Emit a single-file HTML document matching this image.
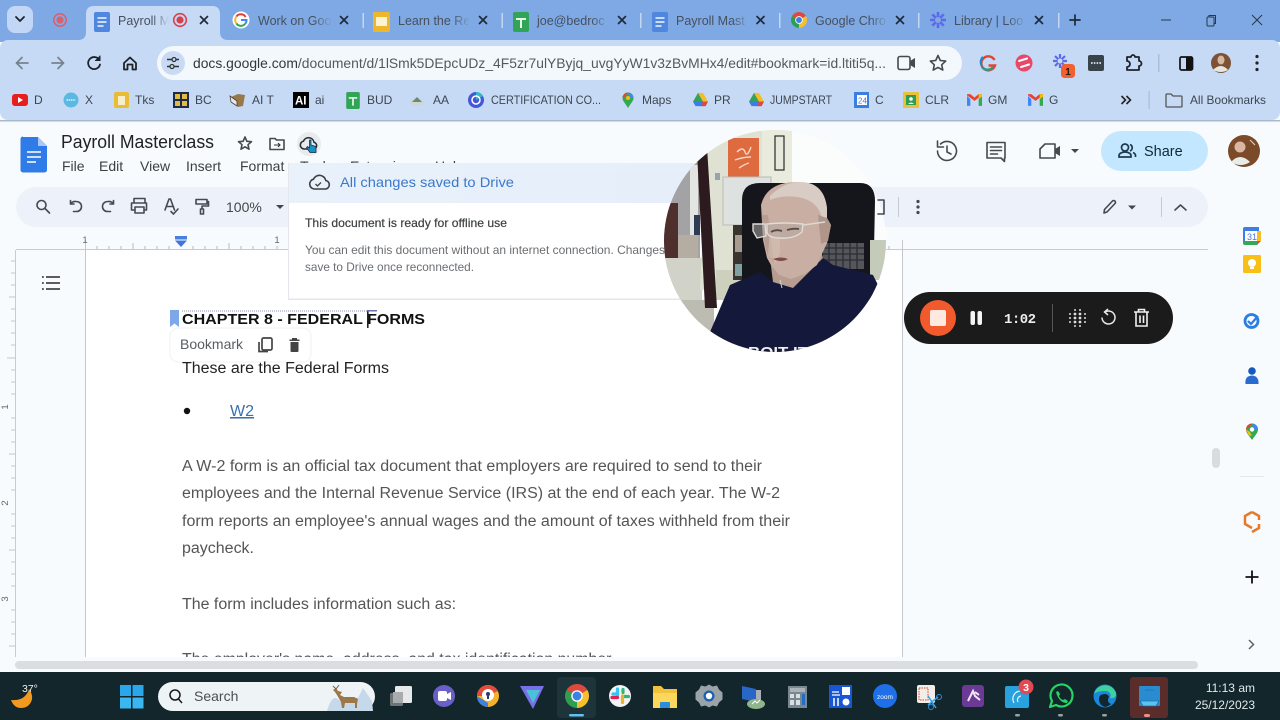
<!DOCTYPE html>
<html lang="en"><head><meta charset="utf-8"><title>Payroll Masterclass</title>
<style>
html,body{margin:0;padding:0;width:1280px;height:720px;overflow:hidden;background:#f8fbfd}
svg{display:block;position:absolute;left:0;top:0;filter:blur(.35px)}
text{font-family:"Liberation Sans",sans-serif;white-space:pre}
.tab{font-size:12.5px;fill:#46505e}
.bm{font-size:12px;fill:#3d4650}
.x{stroke:#1f2a38;stroke-width:1.7;fill:none;stroke-linecap:round}
.ic{fill:none;stroke:#444a50;stroke-width:1.6;stroke-linecap:round;stroke-linejoin:round}
.ic2{fill:none;stroke:#1f2328;stroke-width:1.8;stroke-linecap:round;stroke-linejoin:round}
.menu{font-size:14px;fill:#3c4043}
.body{font-size:15.4px;fill:#555}
</style></head><body>
<svg width="1280" height="720" viewBox="0 0 1280 720" xmlns="http://www.w3.org/2000/svg">
<defs>
<symbol id="chrome" viewBox="-10 -10 20 20" overflow="visible"><path d="M0 0L-8.66-5A10 10 0 0 1 8.66-5Z" fill="#dd4a3d"/><path d="M0 0L8.66-5A10 10 0 0 1 0 10Z" fill="#f6c02d"/><path d="M0 0L0 10A10 10 0 0 1-8.66-5Z" fill="#2f9e50"/><circle r="4.8" fill="#fff"/><circle r="3.7" fill="#3b82e6"/></symbol>
<symbol id="docs" viewBox="0 0 16 20" overflow="visible"><rect width="16" height="20" rx="2" fill="#4f86e0"/><path d="M3.5 6h9M3.5 10h9M3.5 14h6" stroke="#dbe7fb" stroke-width="1.8"/></symbol>
<symbol id="sheets" viewBox="0 0 16 20" overflow="visible"><rect width="16" height="20" rx="2" fill="#32a456"/><path d="M3 7h10M8 7v9" stroke="#e6f5ea" stroke-width="2"/></symbol>
<symbol id="drive" viewBox="0 0 18 16" overflow="visible"><path d="M6 0h6l6 10.5h-6z" fill="#f5bd26"/><path d="M6 0l6 10.5-3 5.5L0 10.5z" fill="#2f9e50" opacity=".95"/><path d="M0 10.5h18l-3 5.5H3z" fill="#3b7de6"/><path d="M12 10.5h6l-3 5.5H9z" fill="#dd4a3d"/></symbol>
<symbol id="gmail" viewBox="0 0 18 14" overflow="visible"><path d="M0 2v12h4V6z" fill="#4285f4"/><path d="M14 6v8h4V2z" fill="#34a853"/><path d="M0 1.5L9 8l9-6.5V0h-4L9 4 4 0H0z" fill="#ea4335"/><path d="M14 0h4v3l-4 3z" fill="#fbbc04"/></symbol>
<clipPath id="cam"><circle cx="775" cy="241" r="111"/></clipPath>
<clipPath id="doc"><rect x="85" y="250" width="818" height="407"/></clipPath>
<linearGradient id="hd" x1="0" x2="1" y1="0" y2="0"><stop offset="0" stop-color="#e9f1fb"/><stop offset="1" stop-color="#e5eef9"/></linearGradient>
<linearGradient id="fa" x1="0" x2="1" y1="0" y2="0"><stop offset="0" stop-color="#c6daf5" stop-opacity="0"/><stop offset="1" stop-color="#c6daf5"/></linearGradient>
<linearGradient id="fb" x1="0" x2="1" y1="0" y2="0"><stop offset="0" stop-color="#7fa9e4" stop-opacity="0"/><stop offset="1" stop-color="#7fa9e4"/></linearGradient>
</defs>

<!-- page -->
<rect width="1280" height="720" fill="#f8fbfd"/>

<!-- tab strip -->
<rect width="1280" height="42" fill="#7fa9e4"/>
<rect y="40" width="1280" height="80" rx="8" fill="#c6daf5"/>
<rect y="120" width="1280" height="1.5" fill="#a9b8cc"/>
<rect x="7" y="6" width="26" height="27" rx="8" fill="#c2d7f5"/>
<path d="M16 18l4 4 4-4" class="ic2" transform="translate(0 -1)"/>
<circle cx="60" cy="20" r="6.2" fill="none" stroke="#d8616c" stroke-width="1.6"/><circle cx="60" cy="20" r="3.6" fill="#d8616c"/>
<path d="M78 40q8 0 8-8V14q0-8 8-8h118q8 0 8 8v18q0 8 8 8z" fill="#c6daf5"/>
<use href="#docs" x="94" y="12" width="16" height="20"/>
<text x="118" y="25" class="tab">Payroll M</text>
<rect x="152" y="12" width="17" height="16" fill="url(#fa)"/>
<circle cx="180" cy="20" r="6.3" fill="none" stroke="#d8414c" stroke-width="1.6"/><circle cx="180" cy="20" r="3.6" fill="#d8414c"/>
<path d="M200.500 16.500l7 7m0-7l-7 7" class="x"/>

<circle cx="241" cy="20" r="8.500" fill="#fff"/>
<path d="M245.600 17A5.500 5.500 0 0 0 236.400 16.500" fill="none" stroke="#e34133" stroke-width="2"/>
<path d="M236.400 16.500A5.500 5.500 0 0 0 236.400 23.500" fill="none" stroke="#f6bd2a" stroke-width="2"/>
<path d="M236.400 23.500A5.500 5.500 0 0 0 245 24" fill="none" stroke="#34a853" stroke-width="2"/>
<path d="M245 24a5.500 5.500 0 0 0 1.500-4H241" fill="none" stroke="#4285f4" stroke-width="2"/>
<text x="258" y="25" class="tab">Work on Goo</text>
<rect x="314" y="12" width="18" height="16" fill="url(#fb)"/>
<path d="M340.500 16.500l7 7m0-7l-7 7" class="x"/>
<rect x="362.500" y="13" width="1.500" height="15" fill="#c4d6f0"/>

<rect x="373" y="12" width="17" height="20" rx="2" fill="#eeb72b"/><rect x="376" y="17" width="11" height="9" fill="#fdf3d0"/>
<text x="398" y="25" class="tab">Learn the Re</text>
<rect x="452" y="12" width="18" height="16" fill="url(#fb)"/>
<path d="M479.500 16.500l7 7m0-7l-7 7" class="x"/>
<rect x="501.500" y="13" width="1.500" height="15" fill="#c4d6f0"/>

<use href="#sheets" x="513" y="12" width="16" height="20"/>
<text x="537" y="25" class="tab">joe@bedroc</text>
<rect x="592" y="12" width="18" height="16" fill="url(#fb)"/>
<path d="M618.500 16.500l7 7m0-7l-7 7" class="x"/>
<rect x="640" y="13" width="1.500" height="15" fill="#c4d6f0"/>

<use href="#docs" x="652" y="12" width="16" height="20"/>
<text x="676" y="25" class="tab">Payroll Mast</text>
<rect x="732" y="12" width="18" height="16" fill="url(#fb)"/>
<path d="M757 16.500l7 7m0-7l-7 7" class="x"/>
<rect x="779" y="13" width="1.500" height="15" fill="#c4d6f0"/>

<use href="#chrome" x="791" y="12" width="16" height="16"/>
<text x="815" y="25" class="tab">Google Chro</text>
<rect x="870" y="12" width="18" height="16" fill="url(#fb)"/>
<path d="M896.500 16.500l7 7m0-7l-7 7" class="x"/>
<rect x="918" y="13" width="1.500" height="15" fill="#c4d6f0"/>

<g stroke="#5b6be8" stroke-width="2.600" transform="translate(938 20)"><path d="M0-8V8M-8 0H8M-5.700-5.700L5.700 5.700M-5.700 5.700L5.700-5.700"/></g><circle cx="938" cy="20" r="3" fill="#7fa9e4"/>
<text x="954" y="25" class="tab">Library | Loo</text>
<rect x="1008" y="12" width="18" height="16" fill="url(#fb)"/>
<path d="M1035.500 16.500l7 7m0-7l-7 7" class="x"/>
<rect x="1058" y="13" width="1.500" height="15" fill="#c4d6f0"/>
<path d="M1075 15v10M1070 20h10" class="x"/>
<path d="M1161 20h10" stroke="#2b3646" stroke-width="1"/>
<rect x="1207" y="17" width="7" height="9" rx="1" fill="none" stroke="#2b3646"/><path d="M1209 17v-1.500h6.500v8H1214" fill="none" stroke="#2b3646"/>
<path d="M1252 15l10 10m0-10l-10 10" stroke="#2b3646" stroke-width="1" fill="none"/>

<!-- nav -->
<path d="M28 63H17M22 57.500L16.500 63l5.500 5.500" fill="none" stroke="#76838f" stroke-width="1.700" stroke-linecap="round"/>
<path d="M52 63h11M58 57.500l5.500 5.500-5.500 5.500" fill="none" stroke="#76838f" stroke-width="1.700" stroke-linecap="round"/>
<path d="M99 59.500A6 6 0 1 0 100 64.500" class="ic2"/><path d="M100 55.500v5h-5" fill="#1f2328" stroke="#1f2328" stroke-width="1"/>
<path d="M124 63l6-5.500 6 5.500v6.500h-3.500V64.500h-5v5H124z" class="ic2"/>
<rect x="157" y="46" width="805" height="34" rx="17" fill="#f3f8fd"/>
<circle cx="173" cy="63" r="12" fill="#c9dbf4"/>
<path d="M167 59.500h5M176 59.500h3M167 66.500h3M174 66.500h5" stroke="#333" stroke-width="1.400"/><circle cx="174" cy="59.500" r="2" fill="none" stroke="#333" stroke-width="1.300"/><circle cx="172" cy="66.500" r="2" fill="none" stroke="#333" stroke-width="1.300"/>
<text x="193" y="68" font-size="14" fill="#55595e" textLength="693" lengthAdjust="spacingAndGlyphs"><tspan fill="#33373c">docs.google.com</tspan>/document/d/1lSmk5DEpcUDz_4F5zr7ulYByjq_uvgYyW1v3zBvMHx4/edit#bookmark=id.ltiti5q...</text>
<rect x="898" y="56.500" width="12" height="13" rx="2" class="ic"/><path d="M910 61l5-3v10l-5-3z" fill="#444a50"/>
<path d="M938 55.500l2.300 5 5.400.6-4 3.700 1.100 5.300-4.800-2.700-4.800 2.700 1.100-5.300-4-3.700 5.400-.6z" class="ic"/>
<path d="M994.500 60a7 7 0 1 0 .5 5.500H988.500" fill="none" stroke="#e5452f" stroke-width="2.400"/><path d="M983 57a7 7 0 0 0-1.500 8" fill="none" stroke="#1e88c7" stroke-width="2.400"/><path d="M982 67a7 7 0 0 0 11 0" fill="none" stroke="#2a9a8b" stroke-width="2.400"/>
<circle cx="1024" cy="63" r="8.500" fill="#e8496a"/><path d="M1019 61l8-2.500M1021 67l8-2.500" stroke="#fff" stroke-width="2" stroke-linecap="round"/>
<g stroke="#5b6be8" stroke-width="2.200" transform="translate(1060 61)"><path d="M0-7V7M-7 0H7M-5-5L5 5M-5 5L5-5"/></g><circle cx="1060" cy="61" r="2.500" fill="#c6daf5"/>
<rect x="1061" y="64" width="14" height="14" rx="3.500" fill="#f2602f"/><text x="1068" y="75" font-size="10" font-weight="700" fill="#2a1a14" text-anchor="middle">1</text>
<rect x="1088" y="55" width="16" height="16" rx="2" fill="#37424a"/><path d="M1091 63h10" stroke="#fff" stroke-width="1.600" stroke-dasharray="1.600 1.200"/>
<path d="M1127 57h4a2 2 0 0 1 4 0h4v4a2.500 2.500 0 0 1 0 5v4h-12v-3a2.500 2.500 0 0 0 0-6z" class="ic2"/>
<rect x="1158" y="54" width="1.500" height="18" fill="#a7bedd"/>
<rect x="1180" y="57" width="12.500" height="13" rx="1.500" fill="none" stroke="#111" stroke-width="1.700"/><rect x="1186" y="57" width="6.500" height="13" fill="#111"/>
<circle cx="1221" cy="63" r="10" fill="#7b5236"/><ellipse cx="1221" cy="60" rx="3.500" ry="4.500" fill="#d8b8a0"/><path d="M1213 70q8-8 15 0-7 4-15 0z" fill="#e5e6e2"/>
<g fill="#222"><circle cx="1257" cy="56.500" r="1.600"/><circle cx="1257" cy="63" r="1.600"/><circle cx="1257" cy="69.500" r="1.600"/></g>

<!-- bookmarks -->
<rect x="12" y="94" width="16" height="12" rx="3" fill="#e81d1d"/><path d="M18 97l5 3-5 3z" fill="#fff"/>
<text x="34" y="104" class="bm">D</text>
<circle cx="71" cy="100" r="7.500" fill="#5ab9e2"/><path d="M66.500 100h9" stroke="#fff" stroke-width="1.200" stroke-dasharray="1.500 .7"/>
<text x="85" y="104" class="bm">X</text>
<rect x="114" y="92" width="15" height="16" rx="2" fill="#e9bc36"/><rect x="118" y="96" width="7" height="9" fill="#f8efc8"/>
<text x="135" y="104" class="bm">Tks</text>
<rect x="173" y="92" width="16" height="16" fill="#1c2a4d"/><path d="M175 94h5v5h-5zM182 94h5v5h-5zM175 101h5v5h-5zM182 101h5v5h-5z" fill="#e3bb41"/>
<text x="195" y="104" class="bm">BC</text>
<path d="M231 97l7-3 7 1-2 11-5 1-4-5z" fill="#9a7747"/><path d="M230 96l7 5v5l-6-4z" fill="#e8e8e8" stroke="#444" stroke-width=".8"/>
<text x="252" y="104" class="bm">AI T</text>
<rect x="293" y="92" width="16" height="16" fill="#000"/><text x="295" y="104.500" font-size="11.500" font-weight="700" fill="#fff">AI</text>
<text x="315" y="104" class="bm">ai</text>
<use href="#sheets" x="345" y="92" width="16" height="17"/>
<text x="367" y="104" class="bm">BUD</text>
<ellipse cx="417" cy="102" rx="7" ry="4" fill="#cfd6d6"/><path d="M412 102l5-5 5 5z" fill="#6b8a76"/>
<text x="433" y="104" class="bm">AA</text>
<circle cx="476" cy="100" r="8" fill="#4656d8"/><path d="M476 92a8 8 0 0 1 7 4l-7 4z" fill="#30b9c9"/><circle cx="476" cy="100" r="4" fill="none" stroke="#fff" stroke-width="1.500"/>
<text x="491" y="104" class="bm" textLength="110" lengthAdjust="spacingAndGlyphs">CERTIFICATION CO...</text>
<path d="M628 108c-3-5-5.500-7-5.500-10a5.500 5.500 0 0 1 11 0c0 3-2.500 5-5.500 10z" fill="#34a853"/><path d="M622.500 98a5.500 5.500 0 0 1 5.500-5.500l-3 4z" fill="#ea4335"/><path d="M628 92.500a5.500 5.500 0 0 1 5.500 5.500H630z" fill="#4285f4"/><circle cx="628" cy="98" r="2" fill="#fbbc04"/>
<text x="642" y="104" class="bm">Maps</text>
<use href="#drive" x="693" y="92" width="15" height="15"/>
<text x="714" y="104" class="bm">PR</text>
<use href="#drive" x="749" y="92" width="15" height="15"/>
<text x="770" y="104" class="bm" textLength="62" lengthAdjust="spacingAndGlyphs">JUMPSTART</text>
<rect x="854" y="92" width="15" height="16" fill="#3c7de0"/><rect x="857" y="95" width="10" height="10" fill="#fff"/><text x="858" y="103.500" font-size="8" fill="#3c7de0">24</text>
<text x="875" y="104" class="bm">C</text>
<rect x="903" y="92" width="16" height="16" fill="#e9c13c"/><rect x="906" y="95" width="10" height="10" fill="#2f9e50"/><circle cx="911" cy="99" r="1.800" fill="#fff"/><path d="M908 104q3-3 6 0" fill="#fff"/>
<text x="925" y="104" class="bm">CLR</text>
<use href="#gmail" x="967" y="94" width="15" height="12"/>
<text x="988" y="104" class="bm">GM</text>
<use href="#gmail" x="1028" y="94" width="15" height="12"/>
<text x="1049" y="104" class="bm">G</text>
<path d="M1121.500 96l4 4-4 4M1126.500 96l4 4-4 4" fill="none" stroke="#222" stroke-width="1.600"/>
<rect x="1148.500" y="91" width="1.300" height="18" fill="#a7bedd"/>
<path d="M1166 95a1 1 0 0 1 1-1h4l2 2h8a1 1 0 0 1 1 1v9a1 1 0 0 1-1 1h-14a1 1 0 0 1-1-1z" fill="none" stroke="#555" stroke-width="1.300"/>
<text x="1190" y="104" class="bm" textLength="76" lengthAdjust="spacingAndGlyphs">All Bookmarks</text>

<!-- docs header -->
<path d="M23 137h15l9 9v24a2.500 2.500 0 0 1-2.500 2.500h-21.500a2.500 2.500 0 0 1-2.500-2.500v-31a2.500 2.500 0 0 1 2.500-2.500z" fill="#2f7be8"/>
<path d="M38 137l9 9h-9z" fill="#a8c7fa"/><path d="M27 152h14M27 157h14M27 162h9" stroke="#e3eeff" stroke-width="1.800"/>
<text x="61" y="148" font-size="18" fill="#202124" textLength="153" lengthAdjust="spacingAndGlyphs">Payroll Masterclass</text>
<path d="M245 137l1.900 4.300 4.600.4-3.500 3 1 4.500-4-2.400-4 2.400 1-4.500-3.500-3 4.600-.4z" class="ic"/>
<path d="M270 138.500h5l1.500 1.500h7.500v9.500h-14z" class="ic" stroke="#333"/><path d="M274 145h6m-2-2l2 2-2 2" stroke="#333" stroke-width="1.100" fill="none"/>
<circle cx="309" cy="144" r="12" fill="#e8ebee"/>
<path d="M304 149a4 4 0 0 1-.5-7.900 5.500 5.500 0 0 1 10.500 1.200 3.400 3.400 0 0 1-.5 6.700z" fill="none" stroke="#2b2f33" stroke-width="1.600"/>
<path d="M309.500 140v8l-2-1.500-1 1 3.500 5h6v-6l-5-1.500v-5z" fill="#1b8fc8" stroke="#123" stroke-width=".7"/>

<text x="62" y="171" class="menu">File</text><text x="99" y="171" class="menu">Edit</text><text x="140" y="171" class="menu">View</text><text x="186" y="171" class="menu">Insert</text><text x="240" y="171" class="menu">Format</text>
<text x="300" y="171" class="menu">Tools</text><text x="350" y="171" class="menu">Extensions</text><text x="435" y="171" class="menu">Help</text>

<!-- toolbar -->
<rect x="16" y="187" width="1192" height="40" rx="20" fill="#edf2fa"/>
<circle cx="41.500" cy="205" r="4.500" class="ic" stroke-width="1.800"/><path d="M45 208.500l4.500 4.500" class="ic" stroke-width="1.800"/>
<path d="M74 204h-3.500v-3.500M70.500 204a6 6 0 0 1 5.500-2.500c3.200 0 5.500 2 5.500 5s-2.300 5-5 5h-3" class="ic" transform="translate(0 0)"/>
<path d="M110 204h3.500v-3.500M113.500 204a6 6 0 0 0-5.500-2.500c-3.200 0-5.500 2-5.500 5s2.300 5 5 5h3" class="ic"/>
<path d="M134 203v-4.500h11V203M134 210h-2.500v-7h15v7H144M135 207h9v6h-9z" class="ic"/>
<path d="M165 210l4-11h1.500l4 11M166.500 206.500h7M171 211.500l2.500 2.500 4.500-5" class="ic" stroke-width="1.300"/>
<path d="M196 199.500h11v4.500h-11zM207 201.500h1.500v4.500h-6.500v3M200.500 209h3v5h-3z" class="ic" stroke-width="1.500"/>
<text x="226" y="212" font-size="14" fill="#444746">100%</text>
<path d="M276 205l4 4 4-4z" fill="#444746"/>
<rect x="898" y="197" width="1" height="20" fill="#c7c9cc"/>
<g fill="#444746"><circle cx="918" cy="201.500" r="1.600"/><circle cx="918" cy="207" r="1.600"/><circle cx="918" cy="212.500" r="1.600"/></g>
<path d="M1104 213l.5-3.500 8-8.500a1.500 1.500 0 0 1 2.500 2.500l-8 8.500z" class="ic"/>
<path d="M1128 205.500l4 4 4-4z" fill="#444746"/>
<rect x="1161" y="197" width="1" height="20" fill="#c7c9cc"/>
<path d="M1175 210l5.500-5 5.500 5" class="ic"/>

<!-- right head -->
<path d="M937.500 151a9.500 9.500 0 1 0 3-7" class="ic" stroke-width="2"/><path d="M937.500 141v6h6" class="ic" stroke-width="2"/><path d="M947 146v6l4 2" class="ic" stroke-width="2"/>
<path d="M987 142.500h18v15.500h-.5v3.500l-3.500-3.500H987z" class="ic" stroke-width="2"/><path d="M990.500 147h11M990.500 150.500h11M990.500 154h7" class="ic" stroke-width="1.500"/>
<path d="M1045 144h10v14h-15v-9z" class="ic" stroke-width="2"/><path d="M1055 149l5-3v10l-5-3z" fill="#444a50"/>
<path d="M1071 149l4 4 4-4z" fill="#444746"/>
<rect x="1101" y="131" width="107" height="40" rx="20" fill="#c2e7ff"/>
<circle cx="1125" cy="147.500" r="3.500" fill="none" stroke="#1f3a4d" stroke-width="1.700"/><path d="M1119 157v-1.500c0-2 3-3.500 6-3.500s6 1.500 6 3.500V157zM1130 144.500a3.500 3.500 0 0 1 0 6.500M1133 152.500c1.500.7 2.500 1.700 2.500 3V157" fill="none" stroke="#1f3a4d" stroke-width="1.700"/>
<text x="1144" y="156" font-size="14.500" fill="#0e2a3a">Share</text>
<circle cx="1244" cy="151" r="16" fill="#7b4a28"/><circle cx="1240" cy="147" r="5.500" fill="#d9b7a2"/><path d="M1231 162q9-10 19 0-9 6-19 0z" fill="#e8ece8"/><path d="M1250 140l5 5" stroke="#e8d8c8"/>

<!-- rulers -->
<rect x="16" y="249" width="1192" height="1" fill="#c9cccf"/>
<rect x="85" y="250" width="818" height="407" fill="#fff"/>
<rect x="85" y="240" width="1" height="417" fill="#c5c7ca"/>
<rect x="902" y="240" width="1" height="417" fill="#c5c7ca"/>
<path d="M97 246v3M109 246v3M121 246v3M133 243v6M145 246v3M157 246v3M169 246v3M193 246v3M205 246v3M217 246v3M229 243v6M241 246v3M253 246v3M265 246v3M277 246v3M889 246v3" stroke="#a8abae" stroke-width=".8"/>
<text x="85" y="243" font-size="9.500" fill="#666" text-anchor="middle">1</text><text x="277" y="243" font-size="9.500" fill="#666" text-anchor="middle">1</text>
<rect x="175" y="236" width="12" height="3.500" fill="#4a7fe0"/><path d="M175 240.500h12l-6 6.500z" fill="#3f75dc"/>
<rect x="15" y="250" width="1" height="407" fill="#c9cccf"/>
<path d="M11 261h4M11 273h4M11 285h4M9 297h6M11 309h4M11 321h4M11 333h4M11 345h4M7 358h8M11 370h4M11 382h4M11 394h4M11 418h4M11 430h4M11 442h4M9 454h6M11 466h4M11 478h4M11 490h4M11 514h4M11 526h4M11 538h4M9 550h6M11 562h4M11 574h4M11 586h4M11 610h4M11 622h4M11 634h4M9 646h6" stroke="#b3b6b9" stroke-width=".8"/>
<text transform="translate(8 407) rotate(-90)" font-size="9.500" fill="#666" text-anchor="middle">1</text>
<text transform="translate(8 503) rotate(-90)" font-size="9.500" fill="#666" text-anchor="middle">2</text>
<text transform="translate(8 599) rotate(-90)" font-size="9.500" fill="#666" text-anchor="middle">3</text>
<path d="M46 277h14M46 283h14M46 289h14" stroke="#444746" stroke-width="1.700"/><path d="M42 277h1.800M42 283h1.800M42 289h1.800" stroke="#444746" stroke-width="1.800"/>

<!-- doc -->
<path d="M182 311H376" stroke="#8a8fb5" stroke-width="1" stroke-dasharray="1 1"/>
<path d="M170 310h9v17l-4.500-3.500-4.500 3.500z" fill="#7da7e9"/>
<text x="182" y="324" font-size="15" font-weight="700" fill="#111" textLength="243" lengthAdjust="spacingAndGlyphs">CHAPTER 8 - FEDERAL FORMS</text>
<rect x="367" y="310" width="1.600" height="18" fill="#222"/><rect x="367" y="310" width="10" height="1.500" fill="#6a6fb0"/>
<rect x="170" y="328" width="141" height="34" rx="8" fill="#fff" stroke="#f0f1f2"/>
<text x="180" y="349" font-size="14" fill="#5a5e62">Bookmark</text>
<rect x="262" y="338" width="10" height="12" rx="1.500" fill="none" stroke="#444" stroke-width="1.700"/><path d="M259 342v9.500h9" fill="none" stroke="#444" stroke-width="1.700"/>
<path d="M289.500 339.500h10v1.500h-10z" fill="#444"/><path d="M292 338h5v2h-5zM290.500 342h8v9a1 1 0 0 1-1 1h-6a1 1 0 0 1-1-1z" fill="#444"/>
<text x="182" y="373" font-size="15.400" fill="#222" textLength="207" lengthAdjust="spacingAndGlyphs">These are the Federal Forms</text>
<circle cx="187" cy="411" r="3.200" fill="#111"/>
<text x="230" y="416" font-size="15.400" fill="#3a6fb0" text-decoration="underline" textLength="24" lengthAdjust="spacingAndGlyphs">W2</text>
<text x="182" y="471" class="body" textLength="580" lengthAdjust="spacingAndGlyphs">A W-2 form is an official tax document that employers are required to send to their</text>
<text x="182" y="498" class="body" textLength="598" lengthAdjust="spacingAndGlyphs">employees and the Internal Revenue Service (IRS) at the end of each year. The W-2</text>
<text x="182" y="526" class="body" textLength="608" lengthAdjust="spacingAndGlyphs">form reports an employee's annual wages and the amount of taxes withheld from their</text>
<text x="182" y="553" class="body" textLength="72" lengthAdjust="spacingAndGlyphs">paycheck.</text>
<text x="182" y="609" class="body" textLength="274" lengthAdjust="spacingAndGlyphs">The form includes information such as:</text>
<g clip-path="url(#doc)"><text x="182" y="664" class="body" textLength="433" lengthAdjust="spacingAndGlyphs">The employer's name, address, and tax identification number.</text></g>

<!-- popup -->
<rect x="288" y="163" width="420" height="137" fill="#e3e6ea"/>
<rect x="289" y="163" width="420" height="135.500" fill="#fff"/>
<rect x="289" y="163" width="420" height="40" fill="url(#hd)"/>
<path d="M314 189a5 5 0 0 1-.5-9.800 6.500 6.500 0 0 1 12.300 1.300 4.300 4.300 0 0 1-.3 8.500z" fill="none" stroke="#3c4043" stroke-width="1.600"/><path d="M315.500 184l2 2 3.500-3.500" fill="none" stroke="#3c4043" stroke-width="1.300"/>
<text x="340" y="187" font-size="14" fill="#3b78c9" textLength="174" lengthAdjust="spacingAndGlyphs">All changes saved to Drive</text>
<text x="305" y="227" font-size="12" fill="#3c4043" textLength="202" lengthAdjust="spacingAndGlyphs" stroke="#3c4043" stroke-width=".2">This document is ready for offline use</text>
<text x="305" y="254" font-size="12" fill="#6a6e72" textLength="360" lengthAdjust="spacingAndGlyphs">You can edit this document without an internet connection. Changes</text>
<text x="305" y="271" font-size="12" fill="#6a6e72" textLength="169" lengthAdjust="spacingAndGlyphs">save to Drive once reconnected.</text>

<!-- webcam -->
<circle cx="775" cy="241" r="111" fill="#fbfdfd" fill-opacity=".82"/>
<path d="M878 200h6v14h-6" class="ic"/>
<g clip-path="url(#cam)">
<!-- room left -->
<rect x="664" y="130" width="36" height="222" fill="#a3a3a6"/>
<rect x="690" y="165" width="8" height="75" fill="#e2e5e2"/>
<rect x="664" y="203" width="14" height="56" fill="#4e2f2c"/>
<rect x="678" y="235" width="20" height="23" fill="#b5aca2"/>
<rect x="664" y="258" width="38" height="94" fill="#d1d3c8"/>
<rect x="664" y="300" width="50" height="52" fill="#bdbcb2"/>
<rect x="694" y="215" width="6" height="20" fill="#2f3b55"/>
<!-- wall -->
<path d="M707 130h85v160H700z" fill="#dfe2d2"/>
<rect x="762" y="130" width="30" height="60" fill="#e9ebdd"/>
<rect x="716" y="270" width="80" height="30" fill="#cdd0bd"/>
<path d="M697 152l10-5 10 161h-12z" fill="#2d1a1f"/>
<rect x="728" y="138" width="31" height="39" fill="#de6a3f"/>
<path d="M737 152q6-6 8 0t6-5M735 160q8-3 16-3M739 168q6-4 10-5" stroke="#f3d9c8" stroke-width="1.400" fill="none"/>
<rect x="775" y="136" width="9" height="34" fill="#e6e8dc" stroke="#2a2a2a" stroke-width="1.200"/>
<rect x="715" y="173" width="5" height="7" fill="#9aa3a8"/>
<rect x="723" y="177" width="48" height="48" fill="#dde2e0" stroke="#b8bcb4"/>
<rect x="733" y="225" width="14" height="55" fill="#3a3431"/>
<rect x="735" y="235" width="11" height="17" fill="#a89b90"/>
<rect x="735" y="264" width="11" height="12" fill="#7fa2a0"/>
<!-- chair -->
<path d="M742 200q0-17 18-17h100q15 0 15 18l-2 100h-131z" fill="#15161b"/>
<rect x="823" y="243" width="41" height="26" fill="#55565b"/>
<path d="M823 248h41M823 254h41M823 260h41M829 243v26M836 243v26M843 243v26M850 243v26M857 243v26" stroke="#2c2d33" stroke-width="1.300"/>
<rect x="870" y="240" width="20" height="40" fill="#c4cbb8"/>
<!-- shirt -->
<path d="M706 360l4-28 20-47 30-13 13 10 20 6 30-30 10 7 40 10 5 10-18 37-33 22-30 20z" fill="#14183a"/>
<!-- neck & head -->
<path d="M770 258l3 24 20 6 30-30-6-20z" fill="#b79c90"/>
<path d="M797 182q24 0 30 26l0 10 4 7-4 18-10 22-12 9-14 5-12-4-8-10-4-7-4-18-2-35q6-23 36-23z" fill="#c9aea3"/>
<path d="M770 196q14-14 30-14 24 0 27 26l0 12-5-2q-4-16-20-20-18-4-32 2z" fill="#d8ccc5"/>
<path d="M818 215l9 3 4 7-3 16-7 3z" fill="#b0958a"/>
<path d="M762 215q-1 20 6 40l6 8-4-30-2-18z" fill="#a88f85" fill-opacity=".55"/>
<path d="M770 230l-2 25 8 8 4-10 0-22z" fill="#d6bfb4" fill-opacity=".6"/>
<!-- glasses -->
<path d="M753 224l12 0 1 12-9 2-4-7z" fill="#a7a6a5" fill-opacity=".55" stroke="#dedbd5" stroke-width="1.400"/>
<path d="M767 224q18-2 36 0l-1 8q-8 7-22 6-12 0-13-6z" fill="#b5a69f" fill-opacity=".6" stroke="#e0dcd6" stroke-width="1.400"/>
<path d="M803 225l22-3" stroke="#dcd8d0" stroke-width="1.500"/>
<path d="M771 232q5-3 11-1M787 230q6-2 12-1" stroke="#5b4a48" stroke-width="1.800" fill="none"/>
<path d="M773 259q8-3 15 0-7 4-15 0z" fill="#7e4a48"/>
<path d="M780 280l2 8" stroke="#d8cfc6" stroke-width="1"/>
<text x="748" y="357" font-size="15" font-weight="700" fill="#f0f0f0" textLength="60" lengthAdjust="spacingAndGlyphs">BOIT IT</text>
</g>

<!-- recorder -->
<rect x="904" y="292" width="269" height="52" rx="26" fill="#1b1b1b"/>
<circle cx="938" cy="318" r="18" fill="#f05a2c"/><rect x="930" y="310" width="16" height="16" rx="2" fill="#fde9e0"/>
<rect x="970.500" y="311" width="4.500" height="14" rx="2" fill="#f4f4f4"/><rect x="977.500" y="311" width="4.500" height="14" rx="2" fill="#f4f4f4"/>
<text x="1004" y="323" font-size="14" font-weight="700" fill="#eee" style="font-family:'Liberation Mono',monospace" textLength="32">1:02</text>
<rect x="1052" y="304" width="1" height="28" fill="#55585a"/>
<g fill="#ddd"><circle cx="1070" cy="314" r="1"/><circle cx="1070" cy="318" r="1"/><circle cx="1070" cy="322" r="1"/><circle cx="1085" cy="314" r="1"/><circle cx="1085" cy="318" r="1"/><circle cx="1085" cy="322" r="1"/><circle cx="1075" cy="310" r="1"/><circle cx="1080" cy="310" r="1"/><circle cx="1075" cy="326" r="1"/><circle cx="1080" cy="326" r="1"/><circle cx="1075" cy="314" r="1.400"/><circle cx="1080" cy="314" r="1.400"/><circle cx="1075" cy="318" r="1.400"/><circle cx="1080" cy="318" r="1.400"/><circle cx="1075" cy="322" r="1.400"/><circle cx="1080" cy="322" r="1.400"/></g>
<path d="M1105 312a6.500 6.500 0 1 1-3 5.500" fill="none" stroke="#e8e8e8" stroke-width="1.500"/><path d="M1108 309l-3.500 3 3.500 3" fill="none" stroke="#e8e8e8" stroke-width="1.500"/>
<path d="M1134 312h15M1138.500 312v-2.500h6v2.500M1136 312.500v13.500h11v-13.500M1140 315.500v7.500M1143.500 315.500v7.500" fill="none" stroke="#f0f0f0" stroke-width="1.600"/>

<!-- side panel -->
<rect x="1243" y="227" width="18" height="18" rx="1.500" fill="#fff"/><path d="M1243 229a2 2 0 0 1 2-2h14v4h-14v10h-2z" fill="#3d7de6"/><path d="M1243 241h14v4h-12a2 2 0 0 1-2-2z" fill="#34a853"/><path d="M1257 231h4v10h-4z" fill="#f6bd2a"/><path d="M1257 241h4l-4 4z" fill="#dd4a3d"/>
<text x="1252" y="240" font-size="9" fill="#4a7bd5" text-anchor="middle">31</text>
<rect x="1243" y="255" width="18" height="18" rx="1.500" fill="#f8bf17"/><circle cx="1252" cy="263" r="4" fill="#fff"/><rect x="1250" y="267" width="4" height="2" fill="#fff"/>
<circle cx="1251.500" cy="321" r="6.500" fill="none" stroke="#2b7de0" stroke-width="2.800"/><path d="M1248 321l3 3 7-8" fill="none" stroke="#2b7de0" stroke-width="2.200"/>
<circle cx="1252" cy="371" r="3.800" fill="#1558c0"/><path d="M1245.500 384q-1-8 6.500-8.500 7 .5 6.500 8.500z" fill="#2a6bd0"/>
<path d="M1252 440c-3-4.500-6-7-6-10.500a6 6 0 0 1 12 0c0 3.500-3 6-6 10.500z" fill="#34a853"/><path d="M1246 429.500a6 6 0 0 1 6-6l-3 4z" fill="#ea4335"/><path d="M1252 423.500a6 6 0 0 1 6 6h-4z" fill="#4285f4"/><circle cx="1252" cy="429.500" r="2.200" fill="#fff"/><path d="M1246 429.500l3.500 2 2.500 4-3 0z" fill="#fbbc04"/>
<rect x="1240" y="476" width="24" height="1" fill="#e6e9eb"/>
<path d="M1252 512l7 4v4M1259 524v4l-7 4M1252 512l-7 4v8l7 4" fill="none" stroke="#e47a2c" stroke-width="2.500"/>
<path d="M1252 570.500v13M1245.500 577h13" stroke="#111" stroke-width="1.800"/>
<path d="M1249 640l4.500 4.500-4.500 4.500" fill="none" stroke="#5f6368" stroke-width="1.500"/>

<!-- scrollbars -->
<rect x="1212" y="448" width="8" height="20" rx="4" fill="#d9dcdf"/>
<rect x="15" y="661" width="1183" height="8" rx="4" fill="#dbdee1"/>

<!-- taskbar -->
<rect y="672" width="1280" height="48" fill="#12262b"/>
<path d="M11 700q9 1 14-4 3-3 4-7 5 7 2 13-3 6-10 6-7 0-10-8z" fill="#f29a1f"/>
<text x="22" y="692" font-size="10.500" fill="#f2f2f2">37°</text>
<g fill="#2aa7ea"><rect x="120" y="685" width="11" height="11"/><rect x="132.500" y="685" width="11" height="11"/><rect x="120" y="697.500" width="11" height="11" fill="#3ab6f0"/><rect x="132.500" y="697.500" width="11" height="11" fill="#3ab6f0"/></g>
<rect x="158" y="682" width="217" height="29" rx="14.500" fill="#eef3f5"/>
<circle cx="175" cy="695" r="5" fill="none" stroke="#1a1a1a" stroke-width="1.500"/><path d="M178.500 699l3.500 4" stroke="#1a1a1a" stroke-width="1.500"/>
<text x="194" y="701" font-size="14" fill="#4b4f52">Search</text>
<path d="M327 711q4-14 9-13l6 4 8-5 8 1 5-10 9 13 1 10z" fill="#c5d9ea"/>
<path d="M336 688l2 3 4 1-2 3 4 2h10l4 2-1 5v4h-2v-5h-10l-1 5h-2l-1-6-4-7-2-3-2-2z" fill="#9c7748"/>
<path d="M333 686l3 3 3-4" stroke="#7a5d3a" stroke-width="1" fill="none"/>
<rect x="390" y="693" width="13" height="13" rx="1.500" fill="#6f7375"/><rect x="395" y="686" width="17" height="17" rx="1.500" fill="#e6e8ea"/><rect x="393" y="692" width="10" height="11" fill="#a9acae"/>
<circle cx="444" cy="696" r="11" fill="#6a5fc8"/><rect x="438" y="691" width="9" height="10" rx="2" fill="#fff"/><path d="M447 694l4-2v8l-4-2z" fill="#fff"/>
<circle cx="488" cy="696" r="11" fill="#f4b22a"/><path d="M488 685a11 11 0 0 1 10 6l-10 5z" fill="#e24c3c"/><path d="M477 696a11 11 0 0 1 11-11v11z" fill="#e24c3c"/><path d="M477 696a11 11 0 0 0 11 11v-4z" fill="#3f7fe0"/><circle cx="488" cy="695" r="6" fill="#fff"/><circle cx="488" cy="694" r="2" fill="#2a3d6c"/><rect x="487" y="695" width="2" height="4" fill="#2a3d6c"/>
<path d="M520 686h24l-11 23z" fill="#7a6fe8"/><path d="M526 690h14l-7 13z" fill="#49c2d8"/>
<rect x="557" y="677" width="39" height="41" rx="4" fill="#1d343a"/>
<use href="#chrome" x="565" y="684" width="24" height="24"/>
<rect x="569" y="714" width="15" height="2.500" rx="1.200" fill="#64c0ee"/>
<circle cx="620" cy="696" r="11" fill="#f3f3f3"/>
<g stroke-width="3.200" stroke-linecap="round"><path d="M617.500 689v6" stroke="#36c5f0"/><path d="M623 696.500h5.500" stroke="#2eb67d"/><path d="M622.500 697v6.500" stroke="#ecb22e" transform="translate(0 -1)"/><path d="M612 697.500h5.500" stroke="#e01e5a"/><path d="M623 689.500v3" stroke="#2eb67d"/><path d="M613 694h3" stroke="#36c5f0"/></g>
<path d="M653 686h8l3 3h13v19h-24z" fill="#f3c23c"/><rect x="653" y="693" width="24" height="15" fill="#fbd75b"/><rect x="660" y="702" width="10" height="6" rx="1" fill="#2a8fd8"/>
<path d="M709 684.500l3.500 2 4.500-1 2 4 3.500 3v7l-3.500 3-2 4-4.500-1-3.500 2-3.500-2-4.500 1-2-4-3.500-3v-7l3.500-3 2-4 4.500 1z" fill="#9aa3a8"/><circle cx="709" cy="696" r="5.500" fill="#1b5fae"/><circle cx="709" cy="696" r="3.200" fill="#fff"/>
<path d="M742 686l14 3v13l-14-3z" fill="#2867c8"/><rect x="756" y="690" width="5" height="10" fill="#aab0b4"/><ellipse cx="756" cy="704" rx="9" ry="5" fill="#8fb58a"/><path d="M752 704l3-3 2 2 3-3" stroke="#fff" fill="none"/>
<rect x="788" y="686" width="19" height="22" fill="#7b8790"/><rect x="790" y="688" width="15" height="4" fill="#a8b3ba"/><path d="M790 694h4v4h-4zM796 694h4v4h-4zM790 700h4v5h-4zM796 700h4v5h-4z" fill="#d8dfe3"/><rect x="802" y="694" width="3" height="11" fill="#1f6fc8"/>
<rect x="829" y="685" width="23" height="23" fill="#1756d4"/><rect x="842" y="687" width="8" height="8" fill="#fff"/><path d="M832 692h7M832 695h8" stroke="#fff" stroke-width="1.300"/><path d="M834 698v8M838 698v8" stroke="#fff" stroke-width="1.500"/><circle cx="846" cy="702" r="3.500" fill="#fff"/>
<ellipse cx="885" cy="696" rx="12" ry="12" fill="#1f6fe8"/><text x="885" y="699" font-size="6.500" fill="#fff" text-anchor="middle">zoom</text>
<rect x="917" y="685" width="18" height="18" rx="2" fill="#f2ede8"/><rect x="919" y="688" width="9" height="12" fill="none" stroke="#d04a2c" stroke-dasharray="1.500 1"/><path d="M928 696l8 12M938 697l-10 8" stroke="#3aa0e0" stroke-width="1.500"/><circle cx="931" cy="707" r="2.500" fill="none" stroke="#2a8fd8"/><circle cx="939" cy="697" r="2.500" fill="none" stroke="#2a8fd8"/>
<rect x="962" y="685" width="22" height="22" rx="3" fill="#6a3a94"/><path d="M968 701l5-10 2 5 5 4M975 692l4 3" stroke="#f4e6f8" stroke-width="2" fill="none"/>
<rect x="1005" y="686" width="24" height="22" rx="2" fill="#27a2de"/><path d="M1014 703a8 8 0 0 1 6-12M1018 702a4 4 0 0 1 3-6" fill="none" stroke="#eaf6fc" stroke-width="1.200"/>
<circle cx="1026" cy="687" r="7.500" fill="#e14a55"/><text x="1026" y="691" font-size="10.500" fill="#fff" text-anchor="middle" font-weight="700">3</text>
<path d="M1050 707l2-6a11 11 0 1 1 4 4z" fill="#12262b" stroke="#2bd366" stroke-width="2.200" stroke-linejoin="round"/><path d="M1056 692l2-1 2 3-1 2q1 3 4 4l2-1 3 2-1 2q-8 0-11-11z" fill="#2bd366"/>
<circle cx="1105" cy="696" r="11.500" fill="#1c86d8"/><path d="M1094 694a11.500 11.500 0 0 1 22-1c1 4-3 6-6 5 2-4-1-7-5-7-5 0-9 1-11 3z" fill="#3fd0a0"/><path d="M1099 699q0-5 6-5 3 0 4 3c-2 3-1 6 2 7a12 12 0 0 1-6 3c-4-1-6-4-6-8z" fill="#12262b"/>
<rect x="1130" y="677" width="38" height="41" rx="3" fill="#5a2c2a"/><rect x="1139" y="686" width="21" height="20" rx="1" fill="#2a8cd0"/><path d="M1145 690h9M1143 706h13l3-5h-19z" fill="#5cc3f0" stroke="#1f6fb0" stroke-width=".8"/>
<rect x="1144" y="714" width="6" height="3" rx="1.500" fill="#f08a8a"/>
<rect x="1015" y="714" width="5" height="2.500" rx="1.200" fill="#9aa0a3"/><rect x="1058" y="714" width="5" height="2.500" rx="1.200" fill="#9aa0a3"/><rect x="1102" y="714" width="5" height="2.500" rx="1.200" fill="#9aa0a3"/>
<text x="1255" y="692" font-size="12" fill="#e4eaeb" text-anchor="end">11:13 am</text>
<text x="1255" y="709" font-size="12" fill="#e4eaeb" text-anchor="end">25/12/2023</text>
</svg>
</body></html>
